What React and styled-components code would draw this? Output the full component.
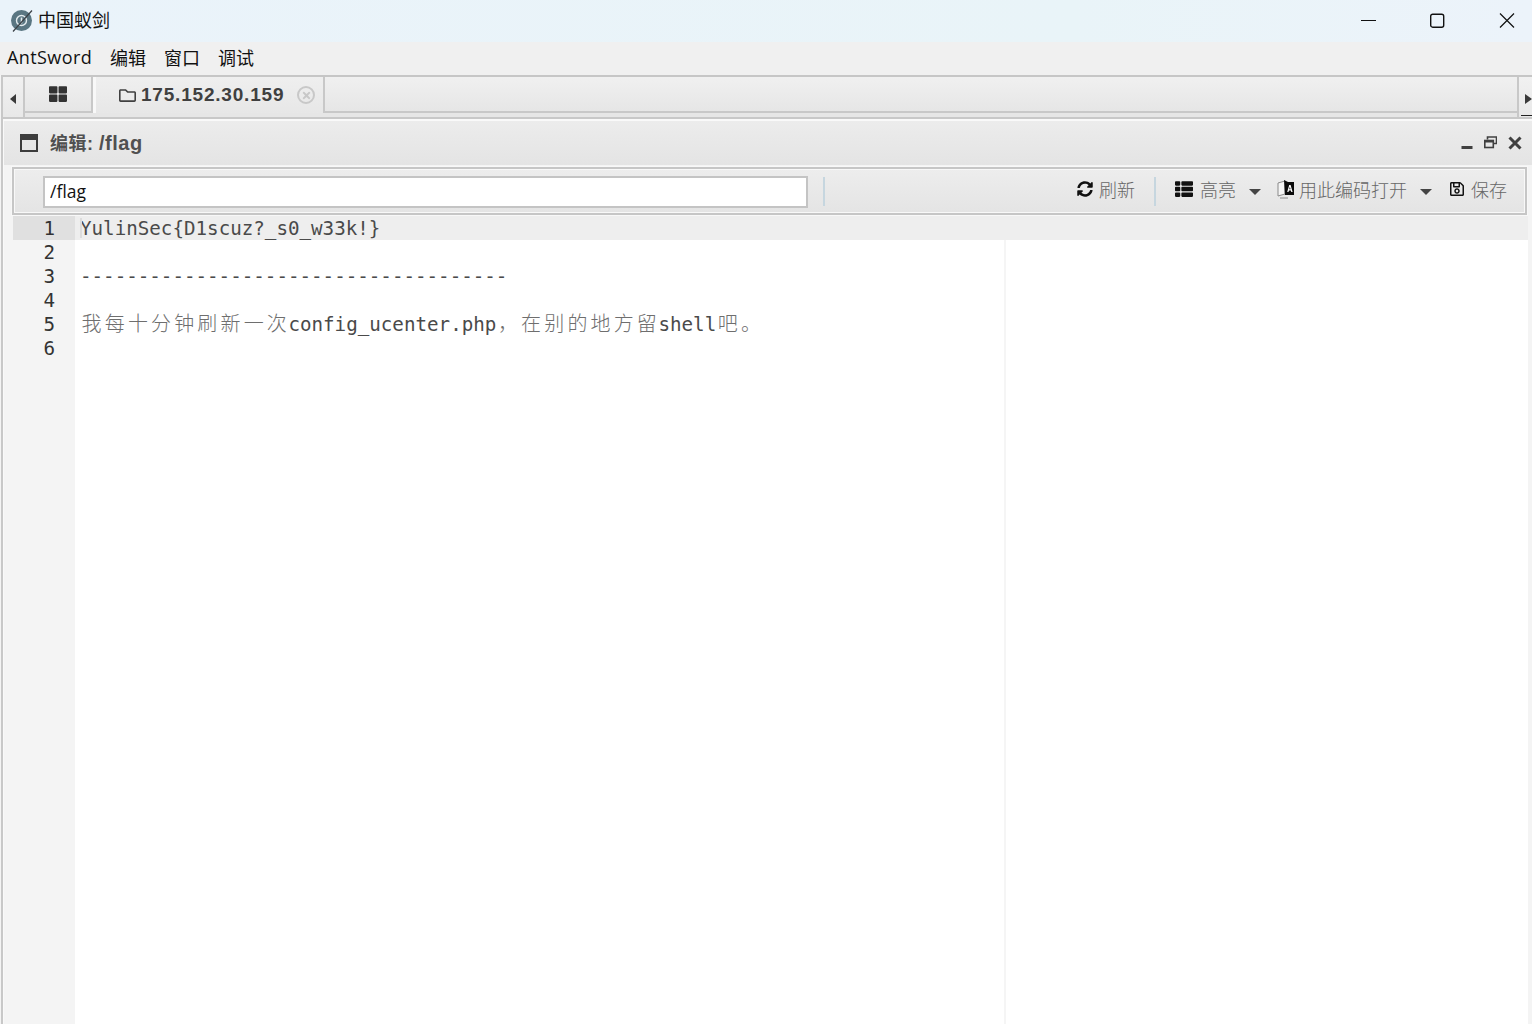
import styled, { createGlobalStyle } from 'styled-components';
import { FaSyncAlt, FaThList, FaRegSave, FaTimes, FaThLarge, FaRegFolder } from 'react-icons/fa';

const Global = createGlobalStyle`
  html, body { margin: 0; padding: 0; height: 100%; overflow: hidden; background: #fff; }
  body { font-family: "Open Sans", "Noto Sans CJK SC", sans-serif; }
`;

const Page = styled.div`
  width: 1532px; height: 1024px; display: flex; flex-direction: column; overflow: hidden;
  background: #f4f4f4;
`;

const TitleBar = styled.div`
  height: 42px; flex: none; display: flex; align-items: center; padding: 0 17px 0 10px;
  box-sizing: border-box;
  background: linear-gradient(90deg, #eaf3fa, #e9f4f8 70%, #ecf3fa);
`;
const AppName = styled.div`
  margin-left: 4px; padding-bottom: 5px; font: 18px "Noto Sans CJK SC", sans-serif; color: #111; flex: 1;
`;
const WinBtns = styled.div`
  display: flex; align-items: center; gap: 53px; padding-bottom: 1px;
`;

const MenuBar = styled.div`
  height: 33px; flex: none; display: flex; align-items: center; gap: 18px; padding: 0 0 3px 7px;
  box-sizing: border-box;
  background: #f0f0f0; font: 18px "Open Sans", "Noto Sans CJK SC", sans-serif; color: #111;
`;
const LatinMenu = styled.span`
  letter-spacing: 0.4px;
`;

const TabBar = styled.div`
  height: 44px; flex: none; display: flex; box-sizing: border-box; margin-left: 1px;
  background: #e6e6e6;
  border-top: 2px solid #c6c6c6; border-bottom: 2px solid #c8c8c8; border-left: 2px solid #c8c8c8;
`;
const ArrowCell = styled.div`
  width: ${p => p.$w}px; flex: none; display: flex; align-items: center; box-sizing: border-box;
  justify-content: ${p => p.$side === 'left' ? 'flex-end' : 'center'};
  padding-top: 4px;
  background: linear-gradient(#f1f1f1, #e8e8e8); position: relative;
  border-${p => p.$side}: 2px solid #c8c8c8;

  ${p => p.$side === 'left' && `
    &::after {
      content: ''; position: absolute; left: 2px; right: 0; bottom: 1px; height: 1px; background: #222;
    }
  `}
`;
const ArrowLeft = styled.span`
  width: 0; height: 0; border-style: solid; border-width: 5px 6px 5px 0;
  border-color: transparent #3a3a3a transparent transparent; margin-left: -1px;
`;
const ArrowRight = styled.span`
  width: 0; height: 0; border-style: solid; border-width: 5px 0 5px 7px;
  border-color: transparent transparent transparent #3a3a3a;
`;
const TabStrip = styled.div`
  flex: 1; height: 36px; display: flex; box-sizing: border-box;
  border-bottom: 2px solid #c8c8c8;
  background: linear-gradient(#f0f0f0, #e6e6e6);
`;
const Tab = styled.div`
  display: flex; align-items: center; box-sizing: border-box; flex: none;
  width: ${p => p.$w}px; color: #404040;
  border-right: 2px solid #c8c8c8;
  ${p => p.$active ? `
    height: 36px; padding-left: 23px; border-left: 3px solid #f8f8f8;
    background: linear-gradient(#efefef, #e7e7e7);
  ` : `
    height: 34px; justify-content: center;
  `}
`;
const TabText = styled.span`
  margin-left: 5px; font: bold 19px "Liberation Sans", sans-serif; letter-spacing: 0.8px; color: #404040;
`;
const TabClose = styled.span`
  margin-left: 13px; width: 18px; height: 18px; box-sizing: border-box;
  border: 2.5px solid #c8c8c8; border-radius: 50%;
  display: flex; align-items: center; justify-content: center; color: #c8c8c8; font-size: 11px;
`;
const Filler = styled.div`
  flex: 1;
`;

const Body = styled.div`
  flex: 1; min-height: 0; padding-left: 1px;
`;
const Panel = styled.div`
  height: 100%; box-sizing: border-box; display: flex; flex-direction: column;
  border-left: 2px solid #c8c8c8; padding: 2px 0 0 1px; background: #f9f9f9;
`;
const PanelHead = styled.div`
  height: 44px; flex: none; display: flex; align-items: center; padding: 0 10px 0 16px;
  background: linear-gradient(#ececec, #e4e4e4); color: #505050;
  font: bold 18px "Liberation Sans", "Noto Sans CJK SC", sans-serif; letter-spacing: 0.5px;
`;
const PanelTitle = styled.span`
  margin-left: 12px; padding-bottom: 2px; flex: 1;
`;
const TitlePath = styled.span`
  font-size: 20px;
`;
const PanelBtns = styled.div`
  display: flex; align-items: center; gap: 11px;
`;
const PanelInner = styled.div`
  flex: 1; min-height: 0; display: flex; flex-direction: column; padding: 2px 0 0 8px;
  background: #f4f4f4;
`;

const Toolbar = styled.div`
  height: 48px; flex: none; box-sizing: border-box; display: flex; align-items: center;
  margin-right: 5px; padding: 0 18px 0 29px;
  background: linear-gradient(#ededed, #e4e4e4);
  border: 2px solid #c6c6c6;
  box-shadow: 0 0 0 1px #f8f8f8, inset 0 0 0 1px #f8f8f8;
`;
const PathInput = styled.input`
  width: 765px; height: 32px; box-sizing: border-box; border: 2px solid #c4c4c4; outline: none;
  padding: 0 5px 2px; margin-top: 1px; background: #fff; font: 17.5px "Open Sans", sans-serif; color: #111;
`;
const Sep = styled.div`
  width: 2px; height: 29px; flex: none; background: #c6d6df;
  margin: 0 ${p => p.$r || 0}px 0 ${p => p.$l || 0}px;
`;
const Tool = styled.div`
  display: flex; align-items: center; gap: ${p => p.$gap || 6}px; white-space: nowrap;
  margin: 0 ${p => p.$r || 0}px 5px ${p => p.$l || 0}px;
  font: 300 18px "Noto Sans CJK SC", sans-serif; color: #666;
`;
const Caret = styled.span`
  width: 0; height: 0; margin-left: 13px; margin-top: 2px; border-style: solid;
  border-width: 6px 6px 0 6px; border-color: #444 transparent transparent transparent;
`;

const Editor = styled.div`
  flex: 1; min-height: 0; display: flex; position: relative; background: #fff;
  margin: 1px 4px 0 1px;
`;
const Gutter = styled.div`
  width: 62px; flex: none; background: #f4f4f4;
`;
const LineNo = styled.div`
  height: 24px; box-sizing: border-box; padding-right: 20px; text-align: right;
  font: 19.2px/26px "DejaVu Sans Mono", monospace; color: #333;
  background: ${p => p.$active ? '#e0e0e0' : 'transparent'};
`;
const Code = styled.div`
  flex: 1; position: relative;
`;
const CodeLine = styled.div`
  height: 24px; box-sizing: border-box; padding-left: 5px; white-space: pre;
  font: 19.2px/26px "DejaVu Sans Mono", monospace; color: #4a4a4a;
  background: ${p => p.$active ? '#eeeeee' : 'transparent'};
`;
const Cjk = styled.span`
  display: inline-block; width: 23.16px; height: 24px; text-align: center; vertical-align: top;
  font: 300 20px/22px "Noto Sans CJK SC", sans-serif; color: #6e6e6e;
`;
const Cursor = styled.div`
  position: absolute; left: 5px; top: 2px; width: 2px; height: 20px; background: #dcdcdc;
`;
const PrintMargin = styled.div`
  position: absolute; left: 929px; top: 24px; bottom: 0; width: 2px; background: #f5f5f5;
`;

const AppLogo = () => (
  <svg width="24" height="24" viewBox="0 0 24 24">
    <circle cx="11.5" cy="11.5" r="10.5" fill="#5a7682" />
    <circle cx="11.5" cy="11.5" r="5" fill="none" stroke="#e4ecef" strokeWidth="1.4" />
    <path d="M11.5 8.5v6" stroke="#e4ecef" strokeWidth="1.6" />
    <path d="M3 22.5 L22 1.5" stroke="#3a4046" strokeWidth="1.2" />
  </svg>
);

const WindowGlyph = () => (
  <svg width="18" height="18" viewBox="0 0 18 18">
    <rect x="1" y="1" width="16" height="16" fill="none" stroke="#3c3c3c" strokeWidth="2" />
    <rect x="1" y="1" width="16" height="5" fill="#3c3c3c" />
  </svg>
);

const LanguageIcon = () => (
  <svg width="17" height="20" viewBox="0 0 17 20">
    <path d="M1 4 L8 2 V15 L1 17 Z M3 19 L11 19" fill="#f4f4f4" stroke="#8a8a8a" strokeWidth="1" />
    <path d="M7 1 L11 3 H17 V16 H8 Z" fill="#0a0a0a" />
    <path d="M10.2 13 L12.2 6 H13.6 L15.6 13 H14.3 L13.9 11.4 H11.9 L11.5 13 Z M12.2 10.3 H13.6 L12.9 7.8 Z" fill="#fff" fillRule="evenodd" />
  </svg>
);

const lines = ['1', '2', '3', '4', '5', '6'];

const wide = text => text.split('').map((c, i) => <Cjk key={i}>{c}</Cjk>);

export default function App() {
  return (
    <Page>
      <Global />
      <TitleBar>
        <AppLogo />
        <AppName>中国蚁剑</AppName>
        <WinBtns>
          <svg width="16" height="16" viewBox="0 0 16 16"><path d="M-1 7.5h16" stroke="#111" strokeWidth="1" /></svg>
          <svg width="16" height="16" viewBox="0 0 16 16"><rect x="0.7" y="1.2" width="13" height="13" rx="2" fill="none" stroke="#111" strokeWidth="1.4" /></svg>
          <svg width="16" height="16" viewBox="0 0 16 16"><path d="M1 0.5l14 14M15 0.5L1 14.5" stroke="#111" strokeWidth="1.2" /></svg>
        </WinBtns>
      </TitleBar>
      <MenuBar>
        <LatinMenu>AntSword</LatinMenu><span>编辑</span><span>窗口</span><span>调试</span>
      </MenuBar>
      <TabBar>
        <ArrowCell $w={22} $side="right"><ArrowLeft /></ArrowCell>
        <TabStrip>
          <Tab $w={68}><FaThLarge size={18} color="#333" /></Tab>
          <Tab $active $w={232}>
            <FaRegFolder size={17} />
            <TabText>175.152.30.159</TabText>
            <TabClose><FaTimes /></TabClose>
          </Tab>
          <Filler />
        </TabStrip>
        <ArrowCell $w={15} $side="left"><ArrowRight /></ArrowCell>
      </TabBar>
      <Body>
        <Panel>
          <PanelHead>
            <WindowGlyph />
            <PanelTitle>编辑: <TitlePath>/flag</TitlePath></PanelTitle>
            <PanelBtns>
              <svg width="12" height="14" viewBox="0 0 12 14"><rect x="0.5" y="10" width="11" height="3" fill="#404040" /></svg>
              <svg width="13" height="14" viewBox="0 0 13 14">
                <path d="M3.5 3.5V1h9v6.5h-3" fill="none" stroke="#404040" strokeWidth="1.6" />
                <rect x="0.8" y="4.5" width="8.5" height="7" fill="none" stroke="#404040" strokeWidth="1.6" />
                <rect x="0" y="4" width="10" height="2.5" fill="#404040" />
              </svg>
              <svg width="14" height="14" viewBox="0 0 14 14"><path d="M1.5 1.5l11 11M12.5 1.5l-11 11" stroke="#404040" strokeWidth="3" /></svg>
            </PanelBtns>
          </PanelHead>
          <PanelInner>
            <Toolbar>
              <PathInput defaultValue="/flag" />
              <Sep $l={15} />
              <Filler />
              <Tool $r={19}><FaSyncAlt size={16} color="#111" />刷新</Tool>
              <Sep $r={19} />
              <Tool $gap={7}><FaThList size={18} color="#111" />高亮</Tool>
              <Caret />
              <Tool $l={16} $gap={5}><LanguageIcon />用此编码打开</Tool>
              <Caret />
              <Tool $l={17}><FaRegSave size={16} color="#111" />保存</Tool>
            </Toolbar>
            <Editor>
              <Gutter>
                {lines.map(n => <LineNo key={n} $active={n === '1'}>{n}</LineNo>)}
              </Gutter>
              <Code>
                <CodeLine $active>YulinSec{'{'}D1scuz?_s0_w33k!{'}'}</CodeLine>
                <CodeLine />
                <CodeLine>{'-'.repeat(37)}</CodeLine>
                <CodeLine />
                <CodeLine>{wide('我每十分钟刷新一次')}config_ucenter.php{wide('，在别的地方留')}shell{wide('吧。')}</CodeLine>
                <CodeLine />
                <Cursor />
                <PrintMargin />
              </Code>
            </Editor>
          </PanelInner>
        </Panel>
      </Body>
    </Page>
  );
}
